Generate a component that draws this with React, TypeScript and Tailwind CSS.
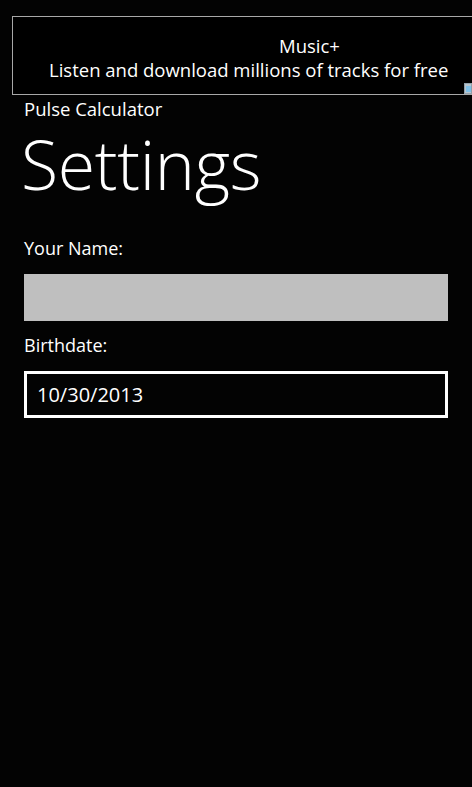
export default function App() {
  return (
    <div
      className="w-[472px] h-[787px] bg-[#030303] text-white overflow-hidden"
      style={{ fontFamily: '"Open Sans", "Noto Sans", sans-serif' }}
    >
      <div className="pt-4 pl-3">
        <div className="relative h-[79px] w-[480px] border border-[#a8a8a8] bg-black">
          <div className="pt-[17px] text-[18.5px] leading-[24px] pl-[266px]">Music+</div>
          <div className="text-[18.5px] leading-[24px] pl-[36px]">
            Listen and download millions of tracks for free
          </div>
          <div className="absolute right-[19px] bottom-[0px] w-[8px] h-[11px] bg-[#b8c4cc] border border-[#8fa0ab]">
            <div className="w-[5px] h-[6px] mt-[2px] ml-[1px] bg-[#7fc0e8]" />
          </div>
        </div>
      </div>

      <div className="px-6">
        <div className="text-[18.5px] leading-[22px] mt-[3px]">Pulse Calculator</div>
        <div className="text-[68px] font-light leading-[80px] -ml-[3px] mt-[4px] tracking-[-0.3px]">
          Settings
        </div>
        <div className="text-[18px] leading-[24px] mt-[32px]">Your Name:</div>
        <div className="h-[47px] bg-[#bfbfbf] mt-[14px]" />
        <div className="text-[18px] leading-[24px] mt-[12px]">Birthdate:</div>
        <div className="h-[47px] border-[3px] border-white mt-[14px] flex items-center pl-[10px]">
          <span className="text-[20px] leading-none">10/30/2013</span>
        </div>
      </div>
    </div>
  );
}
